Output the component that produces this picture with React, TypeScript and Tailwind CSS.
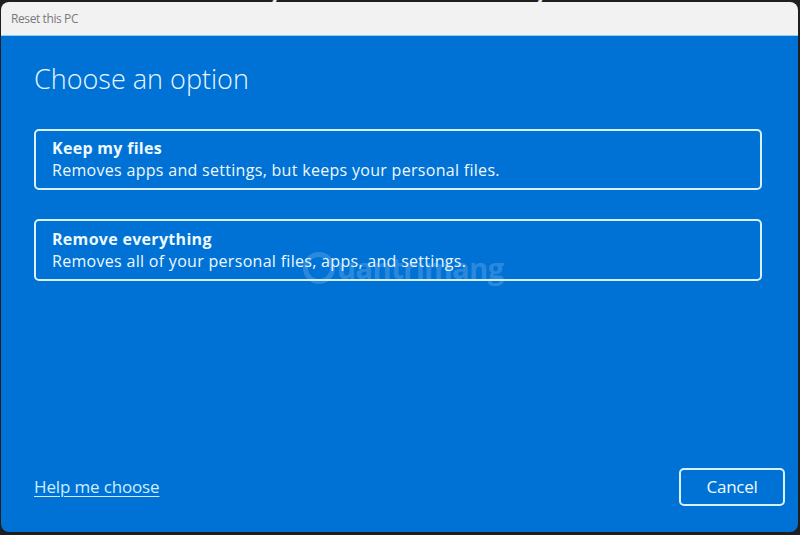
import React from "react";

export default function App() {
  const font = { fontFamily: '"Open Sans", "Noto Sans", "Liberation Sans", sans-serif' };
  return (
    <div className="relative w-[800px] h-[535px] overflow-hidden bg-[#1f1f1f]" style={font}>
      <div className="absolute left-[250px] top-[-35px] text-[30px] font-semibold text-white/90 tracking-wide whitespace-nowrap">
        System&nbsp;&nbsp;&gt;&nbsp;&nbsp;Recovery
      </div>
      <div className="relative ml-[1px] mt-[2px] w-[797px] h-[530px] rounded-[8px] overflow-hidden flex flex-col">
        <div className="h-[34px] bg-[#f2f2f2] border-b border-[#8fd0ee] flex items-center pl-[10px]">
          <span className="text-[12px] text-[#7a7a7a] tracking-[-0.4px]">Reset this PC</span>
        </div>
        <div className="flex-1 bg-[#0072d5] flex flex-col pl-[33px] pr-[36px] pb-[26px]">
          <h1 className="mt-[25px] text-[27px] leading-[36px] font-light text-[#e8f6ff] tracking-[0px]">
            Choose an option
          </h1>
          <div className="mt-[32px] flex flex-col gap-[29px]">
            <div className="h-[61px] rounded-[5px] border-2 border-[#d8f1ff] px-[16px] pt-[1px] flex flex-col justify-center text-[#eef9ff]">
              <div className="text-[16px] leading-[20px] font-bold tracking-[0.3px]">Keep my files</div>
              <div className="text-[16px] leading-[24px] tracking-[0.3px]">Removes apps and settings, but keeps your personal files.</div>
            </div>
            <div className="h-[62px] rounded-[5px] border-2 border-[#d8f1ff] px-[16px] pt-[1px] flex flex-col justify-center text-[#eef9ff]">
              <div className="text-[16px] leading-[20px] font-bold tracking-[0.3px]">Remove everything</div>
              <div className="text-[16px] leading-[24px] tracking-[0.3px]">Removes all of your personal files, apps, and settings.</div>
            </div>
          </div>
          <div className="mt-auto flex items-center justify-between">
            <a className="text-[17px] text-[#cdeeff] underline underline-offset-[3px] decoration-1 tracking-[-0.15px]">Help me choose</a>
            <button className="mr-[-23px] w-[106px] h-[38px] rounded-[5px] border-2 border-[#d8f1ff] text-[17px] text-[#eef9ff] tracking-[-0.3px]">
              Cancel
            </button>
          </div>
        </div>
        <div className="pointer-events-none absolute left-[302px] top-[244px] flex items-center gap-[2px] opacity-20">
          <div className="w-[32px] h-[32px] rounded-full border-[5px] border-[#cfe8ff]" />
          <span className="text-[29px] font-bold text-[#cfe8ff] tracking-[-0.5px]">uantrimang</span>
        </div>
      </div>
    </div>
  );
}
